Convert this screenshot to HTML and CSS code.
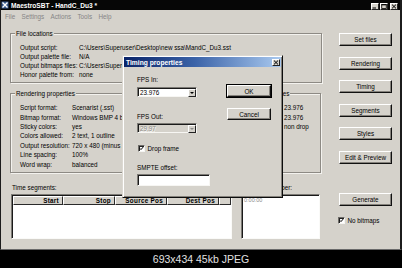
FILE: index.html
```html
<!DOCTYPE html>
<html>
<head>
<meta charset="utf-8">
<title>MaestroSBT</title>
<link rel="stylesheet" href="styles.css">
</head>
<body>
<div class="window">
  <div class="titlebar">
    <svg class="appicon" viewBox="0 0 8 8"><rect x="0.5" y="0.5" width="7" height="7" fill="#3a5a8c"/><path d="M1.5 1.5 L6.5 6.5 M6.5 1.5 L1.5 6.5" stroke="#fff" stroke-width="1.4"/></svg>
    <span class="title">MaestroSBT - HandC_Du3 *</span>
    <div class="caption-btns">
      <span class="cbtn"><svg viewBox="0 0 6 5"><rect x="0.5" y="3.5" width="3.5" height="1" fill="#000"/></svg></span>
      <span class="cbtn"><svg viewBox="0 0 6 5"><rect x="0.75" y="0.5" width="4.5" height="4" fill="none" stroke="#000" stroke-width="0.8"/><rect x="0.5" y="0.3" width="5" height="1" fill="#000"/></svg></span>
      <span class="cbtn close"><svg viewBox="0 0 6 5"><path d="M1 0.6 L5 4.4 M5 0.6 L1 4.4" stroke="#000" stroke-width="1"/></svg></span>
    </div>
  </div>
  <div class="menubar">
    <span>File</span><span>Settings</span><span>Actions</span><span>Tools</span><span>Help</span>
  </div>
  <div class="client">
    <div class="leftcol">
      <div class="group file-group">
        <span class="legend">File locations</span>
        <div class="kv file-kv">
          <span>Output script:</span><span>C:\Users\Superuser\Desktop\new ssa\MandC_Du3.sst</span>
          <span>Output palette file:</span><span>N/A</span>
          <span>Output bitmaps files:</span><span>C:\Users\Superuser\Desktop\new ssa</span>
          <span>Honor palette from:</span><span>none</span>
        </div>
      </div>
      <div class="group-row">
        <div class="group render-group">
          <span class="legend">Rendering properties</span>
          <div class="kv render-kv">
            <span>Script format:</span><span>Scenarist (.sst)</span>
            <span>Bitmap format:</span><span>Windows BMP 4 bit</span>
            <span>Sticky colors:</span><span>yes</span>
            <span>Colors allowed:</span><span>2 text, 1 outline</span>
            <span>Output resolution:</span><span>720 x 480 (minus 2 lines)</span>
            <span>Line spacing:</span><span>100%</span>
            <span>Word wrap:</span><span>balanced</span>
          </div>
        </div>
        <div class="group timing-group">
          <span class="legend">Timing properties</span>
          <div class="kv timing-kv">
            <span></span><span>23.976</span>
            <span></span><span>23.976</span>
            <span></span><span>non drop</span>
          </div>
        </div>
      </div>
      <div class="lists">
        <div class="list-col seg-col">
          <span class="list-label">Time segments:</span>
          <div class="listview">
            <div class="lv-header">
              <span>Start</span><span>Stop</span><span>Source Pos</span><span>Dest Pos</span><span></span>
            </div>
          </div>
        </div>
        <div class="list-col src-col">
          <span class="list-label">Segment number:</span>
          <div class="listbox"><span class="lb-item">0:00:00</span></div>
        </div>
      </div>
    </div>
    <div class="rightcol">
      <div class="btn">Set files</div>
      <div class="btn">Rendering</div>
      <div class="btn">Timing</div>
      <div class="btn">Segments</div>
      <div class="btn">Styles</div>
      <div class="btn">Edit &amp; Preview</div>
      <div class="btn generate">Generate</div>
      <label class="check nobitmaps"><span class="box"><svg viewBox="0 0 6 6"><path d="M1 2.8 L2.4 4.3 L5 1.3" fill="none" stroke="#000" stroke-width="1.2"/></svg></span><span>No bitmaps</span></label>
    </div>
  </div>

  <div class="dialog">
    <div class="dlg-title">
      <span>Timing properties</span>
      <span class="cbtn dlg-close"><svg viewBox="0 0 6 5"><path d="M1 0.6 L5 4.4 M5 0.6 L1 4.4" stroke="#000" stroke-width="1"/></svg></span>
    </div>
    <div class="dlg-body">
      <div class="dlg-left">
        <span class="dlabel fps-in">FPS In:</span>
        <div class="combo"><span class="combo-text">23.976</span><span class="combo-btn"><svg viewBox="0 0 6 6"><path d="M1 2 L5 2 L3 4 Z" fill="#000"/></svg></span></div>
        <span class="dlabel fps-out">FPS Out:</span>
        <div class="combo disabled"><span class="combo-text">29.97</span><span class="combo-btn"><svg viewBox="0 0 6 6"><path d="M1 2 L5 2 L3 4 Z" fill="#8a8a8a"/></svg></span></div>
        <label class="check dropframe"><span class="box"><svg viewBox="0 0 6 6"><path d="M1 2.8 L2.4 4.3 L5 1.3" fill="none" stroke="#000" stroke-width="1.2"/></svg></span><span>Drop frame</span></label>
        <span class="dlabel smpte">SMPTE offset:</span>
        <div class="textbox"></div>
      </div>
      <div class="dlg-right">
        <div class="btn default">OK</div>
        <div class="btn cancel">Cancel</div>
      </div>
    </div>
  </div>
</div>
<div class="caption">693x434 45kb JPEG</div>
</body>
</html>
```

FILE: styles.css
```css
* { box-sizing: border-box; margin: 0; padding: 0; }
html, body { width: 402px; height: 268px; overflow: hidden; background: #000; }
body {
  font-family: "Liberation Sans", Arial, sans-serif;
  font-size: 6.3px;
  line-height: 7px;
  color: #000;
}

.window {
  position: relative;
  width: 402px;
  height: 250px;
  background: #d5d2cb;
  border-left: 1px solid #1c1c1c;
  border-right: 2px solid #1c1c1c;
  border-bottom: 1px solid #6a6a6a;
}

/* title bar */
.titlebar {
  height: 10px;
  background: #060606;
  display: flex;
  align-items: center;
}
.appicon { width: 8px; height: 8px; margin-right: 2px; }
.title { color: #fff; font-weight: bold; font-size: 6.6px; }
.caption-btns { margin-left: auto; margin-right: 2px; display: flex; gap: 1px; margin-top: 3px; }
.cbtn {
  width: 8px;
  height: 7px;
  background: #d5d2cb;
  border: 1px solid;
  border-color: #fff #222 #222 #fff;
  display: flex;
  align-items: center;
  justify-content: center;
}
.cbtn svg { width: 6px; height: 5px; }
.caption-btns .close { margin-left: 1px; }

/* menu */
.menubar {
  height: 12px;
  display: flex;
  align-items: center;
  gap: 6.3px;
  padding-left: 4px;
  color: #858585;
}

/* client */
.client {
  display: flex;
  gap: 17px;
  padding: 11px 0 0 9px;
}
.leftcol { width: 312px; display: flex; flex-direction: column; }
.rightcol { width: 53px; display: flex; flex-direction: column; }

.group {
  border: 1px solid #8d8a84;
  box-shadow: inset 1px 1px 0 #f3f2ee, 1px 1px 0 #f3f2ee;
}
.legend {
  display: block;
  width: max-content;
  height: 7px;
  margin: -4.5px 0 0 4px;
  padding: 0 1px;
  background: #d5d2cb;
}
.kv { display: grid; }
.kv span { white-space: nowrap; }

.file-group { height: 50px; }
.file-kv {
  grid-template-columns: 59px auto;
  grid-auto-rows: 9px;
  align-items: center;
  margin: 6.7px 0 0 9px;
}

.group-row { display: flex; gap: 7px; margin-top: 10px; }
.render-group { width: 218px; height: 80px; }
.timing-group { width: 86px; height: 80px; }
.render-kv {
  grid-template-columns: 52px auto;
  grid-auto-rows: 9.4px;
  align-items: center;
  margin: 6.5px 0 0 9px;
}
.timing-kv {
  grid-template-columns: 39px auto;
  grid-auto-rows: 9.6px;
  align-items: center;
  margin: 6.5px 0 0 9px;
}

.lists { display: flex; gap: 9px; margin-top: 10.5px; padding-left: 1px; }
.list-col { display: flex; flex-direction: column; }
.list-label { height: 7px; margin-left: 1px; }
.seg-col { width: 221px; }
.src-col { width: 79px; }
.listview, .listbox {
  margin-top: 3px;
  height: 45px;
  background: #fff;
  border: 1px solid;
  border-color: #7c7a75 #fafaf8 #fafaf8 #7c7a75;
  box-shadow: inset 1px 1px 0 #1a1a1a;
}
.listview { padding: 1px 0 0 1px; }
.lv-header {
  display: grid;
  grid-template-columns: 50px 52px 52px 52px 1fr;
  height: 9px;
}
.lv-header span {
  background: #d5d2cb;
  border: 1px solid;
  border-color: #fff #2a2a2a #2a2a2a #fff;
  text-align: right;
  padding-right: 3px;
  font-weight: bold;
  letter-spacing: 0.3px;
  line-height: 7px;
  white-space: nowrap;
  overflow: hidden;
}
.listbox { padding: 1px 0 0 2px; }
.lb-item { color: #8a8a8a; font-size: 5.5px; }

/* buttons */
.btn {
  height: 13px;
  background: #d5d2cb;
  border: 1px solid;
  border-color: #fff #111 #111 #fff;
  box-shadow: inset -1px -1px 0 #85827c;
  display: flex;
  align-items: center;
  justify-content: center;
  white-space: nowrap;
}
.rightcol .btn { margin-bottom: 10.6px; }
.rightcol .generate { margin-top: 18.4px; margin-bottom: 11.5px; }

.check { display: flex; align-items: center; gap: 2.5px; height: 7px; }
.box {
  width: 7px;
  height: 7px;
  background: #fff;
  border: 1px solid;
  border-color: #6e6c68 #f5f5f2 #f5f5f2 #6e6c68;
  box-shadow: inset 1px 1px 0 #222;
  display: flex;
  align-items: center;
  justify-content: center;
}
.box svg { width: 5px; height: 5px; }
.nobitmaps { margin-left: -1px; }

/* dialog */
.dialog {
  position: absolute;
  left: 121px;
  top: 55px;
  width: 161px;
  height: 143px;
  background: #d5d2cb;
  border: 1px solid;
  border-color: #dcd9d2 #0c0c0c #0c0c0c #dcd9d2;
  box-shadow: inset 1px 1px 0 #fff, inset -1px -1px 0 #84817b;
  padding: 1px;
}
.dlg-title {
  height: 10px;
  background: linear-gradient(to right, #0b2468 0%, #3b63a8 45%, #a9c9ef 100%);
  color: #fff;
  font-weight: bold;
  font-size: 6.7px;
  display: flex;
  align-items: center;
  padding-left: 2px;
}
.dlg-close { margin-left: auto; margin-right: 1px; }

.dlg-body {
  display: flex;
  padding-left: 13px;
  gap: 15px;
}
.dlg-left { width: 75px; display: flex; flex-direction: column; }
.dlg-right { width: 44px; display: flex; flex-direction: column; }

.dlabel { height: 7px; }
.fps-in { margin-top: 8.5px; }
.fps-out { margin-top: 16px; }
.smpte { margin-top: 12.5px; }

.combo {
  width: 60px;
  height: 10px;
  margin-top: 4.5px;
  background: #fff;
  border: 1px solid;
  border-color: #7c7a75 #f7f6f3 #f7f6f3 #7c7a75;
  box-shadow: inset 1px 1px 0 #1a1a1a;
  display: flex;
  align-items: center;
  padding: 1px 0 0 1px;
}
.combo.disabled { margin-top: 3px; background: #d5d2cb; }
.combo.disabled .combo-text { color: #8d8b86; text-shadow: 0.5px 0.5px 0 #fff; }
.combo-text { flex: 1; padding-left: 1px; }
.combo-btn {
  width: 8px;
  height: 8px;
  background: #d5d2cb;
  border: 1px solid;
  border-color: #fff #222 #222 #fff;
  display: flex;
  align-items: center;
  justify-content: center;
}
.combo-btn svg { width: 6px; height: 6px; }

.dropframe { margin-top: 11.5px; margin-left: 1px; }

.textbox {
  width: 73px;
  height: 12px;
  margin-top: 3px;
  background: #fff;
  border: 1px solid;
  border-color: #7c7a75 #f7f6f3 #f7f6f3 #7c7a75;
  box-shadow: inset 1px 1px 0 #1a1a1a;
}

.dlg-right .btn { height: 12px; }
.dlg-right .default {
  margin-top: 18px;
  outline: 1px solid #000;
}
.dlg-right .cancel { margin-top: 11px; }

.caption {
  height: 18px;
  line-height: 18px;
  text-align: center;
  color: #e2e2e2;
  font-size: 10.5px;
}
```
